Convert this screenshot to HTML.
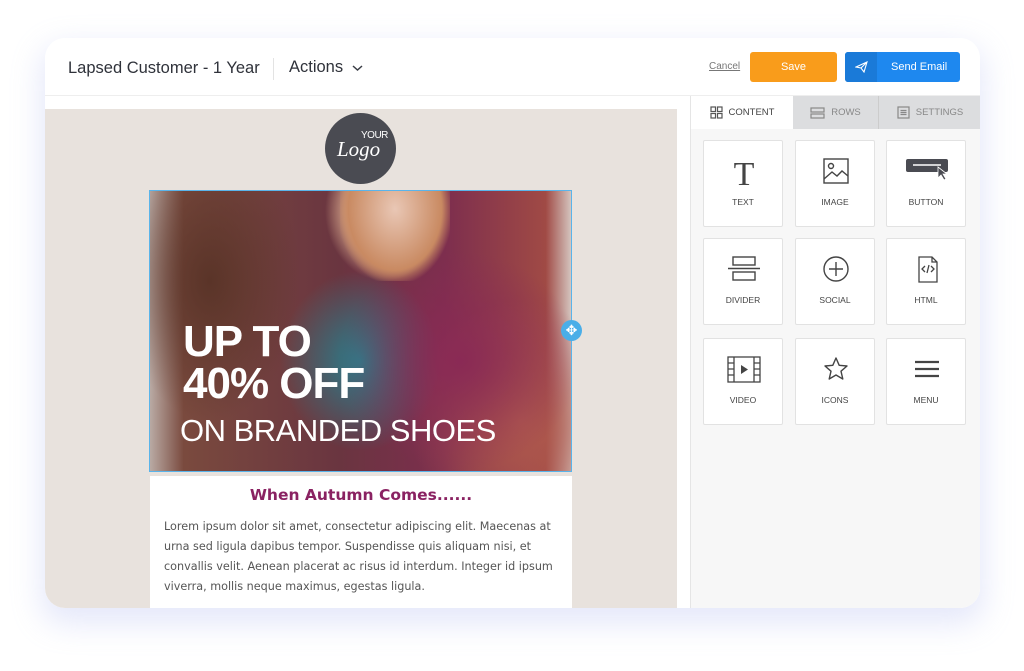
<!DOCTYPE html>
<html><head><style>
*{margin:0;padding:0;box-sizing:border-box}
body{width:1024px;height:671px;background:#fff;position:relative;overflow:hidden;font-family:"Liberation Sans",sans-serif}
.shadow{position:absolute;left:45px;top:38px;width:935px;height:570px;border-radius:20px;box-shadow:0 12px 30px 4px rgba(170,180,240,.30)}
.card{position:absolute;left:45px;top:38px;width:935px;height:570px;background:#fff;border-radius:20px;overflow:hidden}
.abs{position:absolute}
.title{left:23px;top:21px;font-size:16.5px;color:#2f323a}
.sep{left:228px;top:20px;width:1px;height:22px;background:#e3e3e3}
.actions{left:244px;top:20px;font-size:16.5px;color:#2f323a}
.cancel{left:664px;top:23px;font-size:10px;color:#777;text-decoration:underline}
.save{left:705px;top:14px;width:87px;height:30px;background:#f99c1b;border-radius:3px;color:#fff;font-size:11px;text-align:center;line-height:30px}
.send{left:800px;top:14px;width:115px;height:30px;background:#1e88ef;border-radius:3px;color:#fff;font-size:11px;line-height:30px;overflow:hidden}
.hline{left:0;top:57px;width:935px;height:1px;background:#eee}
.canvas{left:0;top:71px;width:632px;height:499px;background:#e8e2dd}
.panel{left:645px;top:58px;width:290px;height:512px;background:#f7f7f7;border-left:1px solid #e5e5e5}
.tab{top:0;height:33px;font-size:9.5px;color:#888;display:flex;align-items:center;justify-content:center;gap:6px}
.tile{width:80px;height:87px;background:#fff;border:1px solid #e2e2e2;border-radius:2px;font-size:8.5px;color:#444;text-align:center}
.tile svg{position:absolute;left:20px;top:14px}
.tile span{position:absolute;left:0;width:100%;top:56px}
</style></head><body>
<div class="shadow"></div>
<div class="card">
 <div class="abs title">Lapsed Customer - 1 Year</div>
 <div class="abs sep"></div>
 <div class="abs actions">Actions <svg width="11" height="8" viewBox="0 0 11 8" style="margin-left:4px"><path d="M1 2l4.5 4L10 2" stroke="#3a3d45" stroke-width="1.5" fill="none"/></svg></div>
 <div class="abs cancel">Cancel</div>
 <div class="abs save">Save</div>
 <div class="abs send"><div style="position:absolute;left:0;top:0;width:32px;height:30px;background:#1a7ad8"></div>
  <svg class="abs" style="left:10px;top:9px" width="13" height="12" viewBox="0 0 13 12"><path d="M1 6L12 1 9 11 6 7z M6 7L12 1" stroke="#fff" fill="none" stroke-width="1.1"/></svg>
  <span style="position:absolute;left:46px">Send Email</span></div>
 <div class="abs hline"></div>
 <div class="abs canvas">
  <div class="abs" style="left:280px;top:4px;width:71px;height:71px;border-radius:50%;background:#4a4b52;color:#fff">
   <div class="abs" style="left:36px;top:17px;font-size:10px;letter-spacing:-.5px">YOUR</div>
   <div class="abs" style="left:12px;top:24px;font-size:21px;font-family:'Liberation Serif',serif;font-style:italic">Logo</div>
  </div>
  <div class="abs" style="left:104px;top:81px;width:423px;height:282px;border:1.5px solid #5ab4ea;overflow:hidden;background:
   radial-gradient(ellipse 60px 70px at 235px 20px,#e8c3ae 0%,#d9a98c 60%,transparent 100%),
   radial-gradient(ellipse 90px 140px at 60px 90px,#5a3428 0%,transparent 100%),
   radial-gradient(ellipse 120px 110px at 310px 170px,#8a2a55 0%,transparent 100%),
   radial-gradient(ellipse 80px 90px at 210px 170px,#2a7f8c 0%,transparent 100%),
   radial-gradient(ellipse 110px 120px at 370px 230px,#b05a4e 0%,transparent 100%),
   linear-gradient(90deg,#b9aaa4 0%,#7a4a3e 8%,#6a3540 45%,#7d2e4e 70%,#a04a45 94%,#d4c4be 100%)">
   <div class="abs" style="left:190px;top:0;width:110px;height:90px;background:radial-gradient(ellipse at 50% 20%,#e9c7b5,#c98a62 60%,transparent 75%)"></div>
   <div class="abs" style="left:33px;top:130px;color:#fff;font-weight:bold;font-size:44px;line-height:42px;letter-spacing:-1px">UP TO<br>40% OFF</div>
   <div class="abs" style="left:30px;top:222px;color:#fff;font-size:31px;letter-spacing:-.5px;font-weight:300">ON BRANDED SHOES</div>
  </div>
  <div class="abs" style="left:516px;top:211px;width:21px;height:21px;border-radius:50%;background:#4aaee8;color:#fff;text-align:center;font-size:14px;line-height:20px">✥</div>
  <div class="abs" style="left:105px;top:367px;width:422px;height:140px;background:#fff">
   <div style="text-align:center;margin-top:10px;color:#8a2262;font-weight:bold;font-family:'DejaVu Sans',sans-serif;font-size:15.5px">When Autumn Comes......</div>
   <div style="margin:13px 13px 0 14px;color:#555;font-family:'DejaVu Sans',sans-serif;font-size:11.2px;line-height:20px">Lorem ipsum dolor sit amet, consectetur adipiscing elit. Maecenas at urna sed ligula dapibus tempor. Suspendisse quis aliquam nisi, et convallis velit. Aenean placerat ac risus id interdum. Integer id ipsum viverra, mollis neque maximus, egestas ligula.</div>
  </div>
 </div>
 <div class="abs panel">
  <div class="abs tab" style="left:0;width:102px;background:#fff;color:#444"><svg width="13" height="13"><g fill="none" stroke="#555" stroke-width="1.2"><rect x="1" y="1" width="4.5" height="4.5"/><rect x="7.5" y="1" width="4.5" height="4.5"/><rect x="1" y="7.5" width="4.5" height="4.5"/><rect x="7.5" y="7.5" width="4.5" height="4.5"/></g></svg>CONTENT</div>
  <div class="abs tab" style="left:102px;width:85px;background:#dcdddf"><svg width="15" height="12"><g fill="none" stroke="#888" stroke-width="1.2"><rect x="1" y="1" width="13" height="4"/><rect x="1" y="7" width="13" height="4"/></g></svg>ROWS</div>
  <div class="abs tab" style="left:187px;width:103px;background:#dcdddf;border-left:1px solid #ccc"><svg width="13" height="13"><g fill="none" stroke="#888" stroke-width="1.2"><rect x="1" y="1" width="11" height="11"/><path d="M3.5 4.5h6M3.5 6.5h6M3.5 8.5h6"/></g></svg>SETTINGS</div>
  <div class="abs tile" style="left:12px;top:44px"><svg width="40" height="34"><text x="20" y="30" text-anchor="middle" font-family="Liberation Serif" font-size="34" fill="#444">T</text></svg><span>TEXT</span></div>
  <div class="abs tile" style="left:104px;top:44px"><svg width="40" height="34"><g fill="none" stroke="#444" stroke-width="1.4"><rect x="8" y="4" width="24" height="24"/><circle cx="15" cy="11" r="2.5"/><path d="M8 24l8-7 5 4 5-5 6 5"/></g></svg><span>IMAGE</span></div>
  <div class="abs tile" style="left:195px;top:44px"><svg width="46" height="34" style="left:17px"><rect x="2" y="4" width="42" height="13" rx="2" fill="#4a4b52"/><path d="M9 10h28" stroke="#fff" stroke-width="1.4"/><path d="M34 12l0 11 3-3 3 5 2-1-3-5 4 0z" fill="#4a4b52" stroke="#fff" stroke-width=".8"/></svg><span>BUTTON</span></div>
  <div class="abs tile" style="left:12px;top:142px"><svg width="40" height="34"><g fill="none" stroke="#444" stroke-width="1.4"><rect x="9" y="4" width="22" height="8"/><rect x="9" y="19" width="22" height="8"/><path d="M4 15.5h32"/></g></svg><span>DIVIDER</span></div>
  <div class="abs tile" style="left:104px;top:142px"><svg width="40" height="34"><g fill="none" stroke="#444" stroke-width="1.4"><circle cx="20" cy="16" r="12"/><path d="M20 9v14M13 16h14"/></g></svg><span>SOCIAL</span></div>
  <div class="abs tile" style="left:195px;top:142px"><svg width="40" height="34"><g fill="none" stroke="#444" stroke-width="1.3"><path d="M12 4h13l5 5v20H12z M25 4v5h5"/><path d="M18 13l-3 3 3 3M24 13l3 3-3 3M22 12l-2 8"/></g></svg><span>HTML</span></div>
  <div class="abs tile" style="left:12px;top:242px"><svg width="40" height="34"><g fill="none" stroke="#444" stroke-width="1.3"><rect x="4" y="4" width="32" height="25"/><path d="M10 4v25M30 4v25M4 10h6M4 16h6M4 22h6M30 10h6M30 16h6M30 22h6"/></g><path d="M17 12l7 4.5-7 4.5z" fill="#444"/></svg><span>VIDEO</span></div>
  <div class="abs tile" style="left:104px;top:242px"><svg width="40" height="34"><path d="M20 5l3.2 7.3 7.8.7-6 5.2 1.8 7.8L20 22l-6.8 4 1.8-7.8-6-5.2 7.8-.7z" fill="none" stroke="#444" stroke-width="1.4" stroke-linejoin="round"/></svg><span>ICONS</span></div>
  <div class="abs tile" style="left:195px;top:242px"><svg width="40" height="34"><path d="M8 9h24M8 16h24M8 23h24" stroke="#444" stroke-width="2.2"/></svg><span>MENU</span></div>
 </div>
</div>
</body></html>
